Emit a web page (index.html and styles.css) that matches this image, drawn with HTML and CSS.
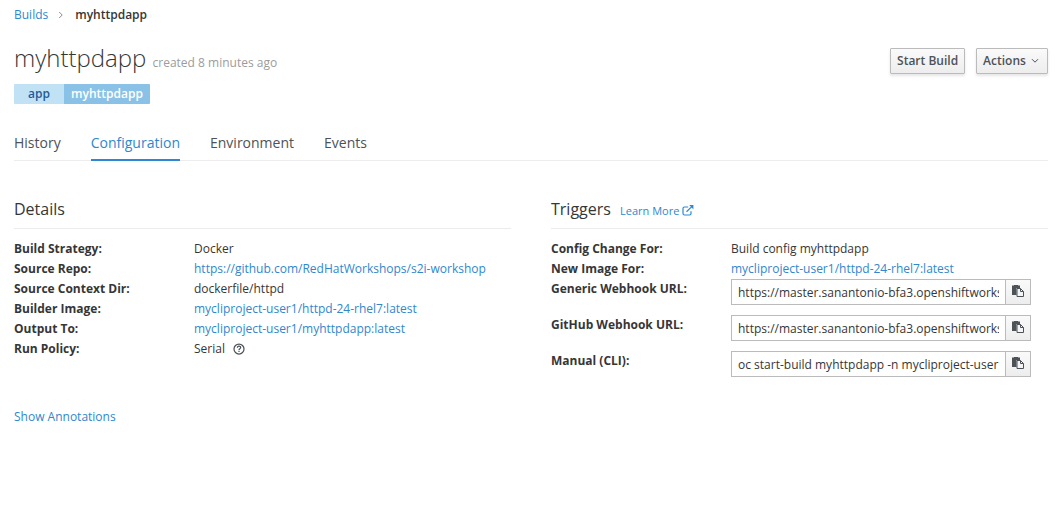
FILE: index.html
```html
<!DOCTYPE html>
<html lang="en">
<head>
<meta charset="utf-8">
<title>myhttpdapp</title>
<link rel="stylesheet" href="styles.css">
</head>
<body>
<main class="page">
  <nav class="breadcrumb">
    <a class="link" href="#">Builds</a>
    <svg class="crumb-sep" width="6" height="8" viewBox="0 0 6 8"><path d="M1.2 1 4.2 4 1.2 7"/></svg>
    <strong>myhttpdapp</strong>
  </nav>
  <header class="header">
    <h1 class="title">myhttpdapp <small class="meta">created 8 minutes ago</small></h1>
    <div class="actions">
      <button class="btn">Start Build</button>
      <button class="btn btn-menu">Actions <svg width="8" height="6" viewBox="0 0 8 6"><path d="M1 1.2 4 4.2 7 1.2"/></svg></button>
    </div>
  </header>
  <div class="label"><span class="label-key">app</span><span class="label-value">myhttpdapp</span></div>
  <ul class="tabs">
    <li class="tab">History</li>
    <li class="tab active">Configuration</li>
    <li class="tab">Environment</li>
    <li class="tab">Events</li>
  </ul>
  <div class="columns">
    <section>
      <h2 class="section-title">Details</h2>
      <dl class="list">
        <dt>Build Strategy:</dt><dd>Docker</dd>
        <dt>Source Repo:</dt><dd><a class="link" href="#">https://github.com/RedHatWorkshops/s2i-workshop</a></dd>
        <dt>Source Context Dir:</dt><dd>dockerfile/httpd</dd>
        <dt>Builder Image:</dt><dd><a class="link" href="#">mycliproject-user1/httpd-24-rhel7:latest</a></dd>
        <dt>Output To:</dt><dd><a class="link" href="#">mycliproject-user1/myhttpdapp:latest</a></dd>
        <dt>Run Policy:</dt><dd class="policy">Serial <svg width="12" height="12" viewBox="0 0 12 12"><circle cx="6" cy="6" r="5"/><path d="M4.300 4.800C4.400 3.700 5.100 3.200 6 3.200c1 0 1.700.6 1.700 1.400C7.700 5.700 6 5.700 6 6.900M6 7.700V9"/></svg></dd>
      </dl>
      <a class="link annotations" href="#">Show Annotations</a>
    </section>
    <section>
      <h2 class="section-title">Triggers <a class="link learn" href="#">Learn More <svg width="12" height="11" viewBox="0 0 12 11"><path d="M6.200 2H2.500Q1 2 1 3.500v5Q1 10 2.500 10h5Q9 10 9 8.500V6.300M4.500 6.700 9.800 1.600"/><path class="arrow-tip" d="M7.200.100H11.400V4.300L10 2.900 8.600 1.500Z"/></svg></a></h2>
      <dl class="list">
        <dt>Config Change For:</dt><dd>Build config myhttpdapp</dd>
        <dt>New Image For:</dt><dd><a class="link" href="#">mycliproject-user1/httpd-24-rhel7:latest</a></dd>
        <dt>Generic Webhook URL:</dt>
        <dd class="copy"><input class="field" readonly value="https://master.sanantonio-bfa3.openshiftworkshop.com"><button class="copy-btn"><svg width="12" height="12" viewBox="0 0 12 12"><path class="board" d="M0 .500H2V0H6V.500H8V3H4.500V10H0Z"/><path class="sheet" d="M5 3.500H8.500L11.500 6.500V11.500H5Z"/><path class="fold" d="M8.500 3.500V6.500H11.500"/></svg></button></dd>
        <dt>GitHub Webhook URL:</dt>
        <dd class="copy"><input class="field" readonly value="https://master.sanantonio-bfa3.openshiftworkshop.com"><button class="copy-btn"><svg width="12" height="12" viewBox="0 0 12 12"><path class="board" d="M0 .500H2V0H6V.500H8V3H4.500V10H0Z"/><path class="sheet" d="M5 3.500H8.500L11.500 6.500V11.500H5Z"/><path class="fold" d="M8.500 3.500V6.500H11.500"/></svg></button></dd>
        <dt>Manual (CLI):</dt>
        <dd class="copy"><input class="field" readonly value="oc start-build myhttpdapp -n mycliproject-user1"><button class="copy-btn"><svg width="12" height="12" viewBox="0 0 12 12"><path class="board" d="M0 .500H2V0H6V.500H8V3H4.500V10H0Z"/><path class="sheet" d="M5 3.500H8.500L11.500 6.500V11.500H5Z"/><path class="fold" d="M8.500 3.500V6.500H11.500"/></svg></button></dd>
      </dl>
    </section>
  </div>
</main>
</body>
</html>
```
FILE: styles.css
```css
* { box-sizing: border-box; }
body {
  margin: 0;
  background: #fff;
  color: #363636;
  font: 12px/20px "Open Sans", sans-serif;
}
.page { padding: 5px 14px 0; }
svg { fill: none; stroke: currentColor; }
.link { color: #2f87d0; text-decoration: none; }
.breadcrumb { display: flex; align-items: center; height: 20px; }
.breadcrumb strong { font-weight: 600; }
.crumb-sep { margin: 0 11px 0 10px; color: #8c8c8c; }
.header { display: flex; justify-content: space-between; height: 59px; padding-top: 19px; }
.title { margin: 0; font-size: 24px; font-weight: 300; line-height: 28px; }
.meta { font-size: 12px; font-weight: 400; color: #9c9c9c; }
.actions { display: flex; gap: 11px; padding-top: 4px; }
.btn {
  height: 26px;
  padding: 0 6px;
  border: 1px solid #bbb;
  border-radius: 1px;
  background: linear-gradient(#fafafa, #ededed);
  box-shadow: 0 2px 3px rgba(3, 3, 3, .1);
  color: #4d5258;
  font: 600 12px/22px "Open Sans", sans-serif;
}
.btn-menu svg { margin: 0 2px 1px 2px; }
.label { display: flex; width: max-content; font-weight: 600; line-height: 20px; border-radius: 1px; overflow: hidden; }
.label-key { width: 50px; text-align: center; background: #c1e1f4; color: #1f5c99; }
.label-value { width: 86px; text-align: center; background: #8ac2e7; color: #fff; }
.tabs {
  display: flex;
  gap: 30px;
  height: 37px;
  margin: 20px 0 0;
  padding: 0;
  border-bottom: 1px solid #ececec;
  list-style: none;
  font-size: 14px;
  line-height: 38px;
  color: #4d5258;
}
.tab { height: 37px; }
.tab.active { color: #2f87d0; border-bottom: 2px solid #2f87d0; }
.columns { display: grid; grid-template-columns: 497px 497px; gap: 40px; }
.section-title {
  height: 29px;
  margin: 39px 0 10px;
  border-bottom: 1px solid #ececec;
  font-size: 16px;
  font-weight: 400;
  line-height: 18px;
}
.learn { margin-left: 5px; font-size: 11px; }
.learn svg { vertical-align: -1px; stroke-width: 1.2; }
.arrow-tip { fill: currentColor; stroke: none; }
.list { display: grid; grid-template-columns: 180px 1fr; margin: 0; }
.list dt { font-weight: 700; }
.list dd { margin: 0; }
.policy svg { margin-left: 5px; vertical-align: -2px; stroke-width: 1.25; color: #4d5258; }
.annotations { display: block; margin-top: 48px; }
.copy { display: flex; width: 300px; height: 36px; }
.field {
  flex: 1;
  min-width: 0;
  height: 26px;
  padding: 1px 6px;
  border: 1px solid #bbb;
  border-right: 0;
  color: #363636;
  font: 12px/20px "Open Sans", sans-serif;
}
.copy-btn {
  display: flex;
  align-items: center;
  justify-content: center;
  width: 26px;
  height: 26px;
  padding: 0 0 2px;
  border: 1px solid #bbb;
  background: linear-gradient(#fafafa, #ededed);
  color: #4d5258;
}
.board { fill: #4d5258; stroke: none; }
.sheet { fill: #f5f5f5; }
```
